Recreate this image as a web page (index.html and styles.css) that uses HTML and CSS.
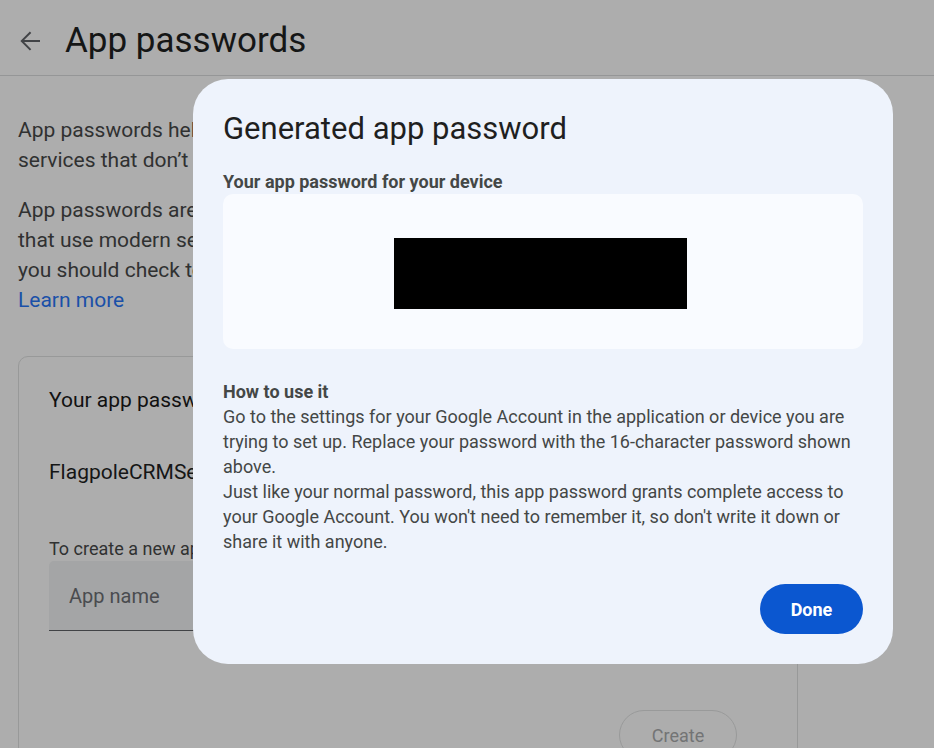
FILE: index.html
```html
<!DOCTYPE html>
<html lang="en">
<head>
<meta charset="utf-8">
<meta name="viewport" content="width=device-width, initial-scale=1">
<title>App passwords</title>
<link rel="stylesheet" href="styles.css">
</head>
<body>
<div class="page">
  <header class="topbar">
    <a class="back" href="#" aria-label="Back">
      <svg viewBox="0 0 24 24" width="30" height="30" aria-hidden="true"><path d="M20 11.200H7.300l5.700-5.700L11.900 4.400 4.300 12l7.600 7.600 1.100-1.100-5.700-5.700H20v-1.600z" fill="currentColor"/></svg>
    </a>
    <h1 class="title">App passwords</h1>
  </header>
  <main class="content">
    <p class="intro">App passwords help you sign into your Google Account on older apps and<br>services that don’t support modern security standards.</p>
    <p class="intro">App passwords are less secure than using up-to-date apps and services<br>that use modern security standards. Before you create an app password,<br>you should check to see if your app needs this in order to sign in.<br><a class="link" href="#">Learn more</a></p>
    <section class="card">
      <h2 class="card-title">Your app passwords</h2>
      <p class="app">FlagpoleCRMService</p>
      <form class="form">
        <label class="hint" for="app-name">To create a new app specific password, type a name for it below...</label>
        <input class="field" id="app-name" type="text" placeholder="App name">
        <button class="create" type="button" disabled>Create</button>
      </form>
    </section>
  </main>
</div>
<div class="overlay">
  <div class="dialog" role="dialog" aria-modal="true" aria-labelledby="dialog-title">
    <h2 class="dialog-title" id="dialog-title">Generated app password</h2>
    <h3 class="subhead">Your app password for your device</h3>
    <div class="secret"><div class="redacted"></div></div>
    <h3 class="subhead">How to use it</h3>
    <p class="text">Go to the settings for your Google Account in the application or device you are trying to set up. Replace your password with the 16-character password shown above.</p>
    <p class="text">Just like your normal password, this app password grants complete access to your Google Account. You won't need to remember it, so don't write it down or share it with anyone.</p>
    <button class="done" type="button">Done</button>
  </div>
</div>
</body>
</html>
```
FILE: styles.css
```css
* { box-sizing: border-box; }
html, body { height: 100%; }
body {
  margin: 0;
  overflow: hidden;
  background: #adadad;
  color: #303131;
  font-family: Roboto, "Liberation Sans", sans-serif;
}
h1, h2, h3, p { margin: 0; font-weight: 400; }
.page { height: 100%; overflow: hidden; }
.topbar {
  display: flex;
  align-items: center;
  gap: 20px;
  height: 76px;
  padding: 7px 15px 0;
  border-bottom: 1px solid #959697;
}
.back { display: flex; color: #414346; }
.title { color: #151616; font-size: 35px; line-height: 44px; }
.content { max-width: 816px; padding: 39px 18px; }
.intro { margin-bottom: 20px; font-size: 21px; line-height: 30px; }
.link { color: #1a50a8; text-decoration: none; }
.card {
  margin-top: 41px;
  padding: 28px 30px;
  border: 1px solid #989999;
  border-radius: 10px;
}
.card-title { color: #111; font-size: 21px; line-height: 30px; }
.app { margin-top: 42px; color: #151616; font-size: 21px; line-height: 30px; }
.form { display: flex; flex-direction: column; margin-top: 50px; }
.hint { font-size: 18px; line-height: 24px; }
.field {
  height: 70px;
  padding: 0 20px;
  border: 0;
  border-bottom: 1px solid #414346;
  border-radius: 5px 5px 0 0;
  background: #a4a5a6;
  font: inherit;
  font-size: 20px;
}
.field::placeholder { color: #4a4c4f; opacity: 1; }
.create {
  align-self: flex-end;
  width: 118px;
  height: 50px;
  margin: 79px 30px 0 0;
  border: 1px solid #999a9a;
  border-radius: 25px;
  background: none;
  color: #737475;
  font: inherit;
  font-size: 18px;
}
.overlay {
  position: fixed;
  inset: 0;
  display: flex;
  align-items: flex-start;
  justify-content: flex-end;
  padding: 79px 41px;
}
.dialog {
  display: flex;
  flex-direction: column;
  width: 100%;
  max-width: 700px;
  padding: 30px;
  border-radius: 35px;
  background: #eef3fc;
  color: #444746;
}
.dialog-title { margin-bottom: 20px; color: #1f1f1f; font-size: 31px; line-height: 40px; }
.subhead { font-size: 18px; line-height: 25px; font-weight: 700; }
.secret {
  display: flex;
  justify-content: center;
  margin-bottom: 30px;
  padding: 44px 26px 40px 20px;
  border-radius: 10px;
  background: #f9fbff;
}
.redacted { width: 293px; height: 71px; background: #000; }
.text { font-size: 18px; line-height: 25px; }
.done {
  align-self: flex-end;
  width: 103px;
  height: 50px;
  margin-top: 30px;
  border: 0;
  border-radius: 25px;
  background: #0b57d0;
  color: #fff;
  font: inherit;
  font-size: 18px;
  font-weight: 700;
}
```
